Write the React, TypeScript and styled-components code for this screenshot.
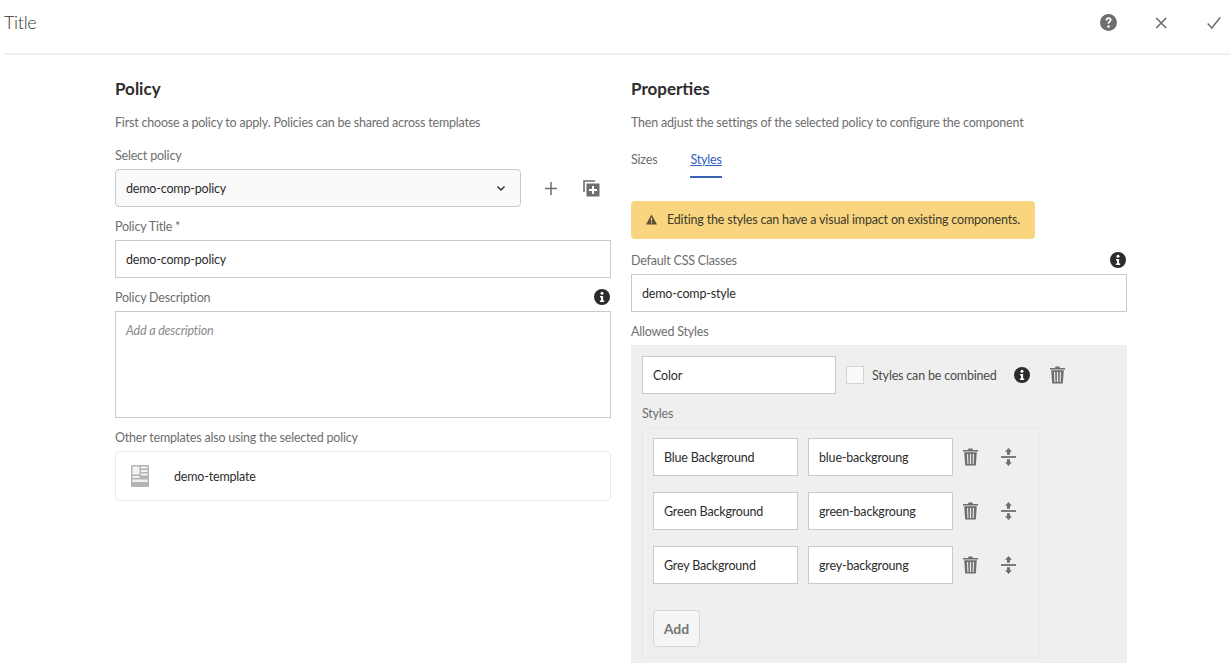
import React from "react";
import styled, { createGlobalStyle } from "styled-components";

const GlobalStyle = createGlobalStyle`
  html, body {
    margin: 0;
    padding: 0;
    height: 100%;
    overflow: hidden;
    background: #fff;
  }
  body {
    font-family: "Lato", "Noto Sans", sans-serif;
    font-size: 12.5px;
    letter-spacing: -0.18px;
    color: #4b4b4b;
  }
  * {
    box-sizing: border-box;
  }
`;

const Page = styled.div`
  width: 1230px;
  height: 663px;
  overflow: hidden;
`;

const TopBar = styled.header`
  height: 55px;
  margin-left: 4px;
  padding-bottom: 10px;
  display: flex;
  align-items: center;
  justify-content: space-between;
  border-bottom: 2px solid #f0f0f0;
`;

const DialogTitle = styled.h1`
  margin: 0;
  font-size: 18px;
  font-weight: 300;
  letter-spacing: -0.3px;
  color: #333;
`;

const TopActions = styled.div`
  display: flex;
  align-items: center;
  gap: 38px;
  padding: 2px 9px 0 0;
  color: #6e6e6e;
`;

const Columns = styled.main`
  display: grid;
  grid-template-columns: 496px 496px;
  column-gap: 20px;
  padding: 24px 0 0 115px;
`;

const Column = styled.section`
  display: flex;
  flex-direction: column;
`;

const Heading = styled.h2`
  margin: 0;
  height: 20px;
  line-height: 20px;
  font-size: 17px;
  font-weight: 700;
  letter-spacing: 0;
  color: #2c2c2c;
`;

const Description = styled.p`
  margin: 15px 0 0;
  height: 16px;
  line-height: 18px;
  letter-spacing: -0.2px;
  color: #6e6e6e;
`;

const Label = styled.div<{ $top?: number }>`
  display: flex;
  align-items: center;
  justify-content: space-between;
  height: 16px;
  line-height: 16px;
  margin-top: ${(p) => p.$top ?? 11}px;
  margin-bottom: 6px;
  padding: 2px 1px 0 0;
  letter-spacing: -0.2px;
  color: #6e6e6e;

  svg {
    margin-top: -2px;
  }
`;

const Select = styled.div`
  flex: 1;
  height: 38px;
  padding: 0 14px 0 10px;
  display: flex;
  align-items: center;
  justify-content: space-between;
  background: #fafafa;
  border: 1px solid #cacaca;
  border-radius: 4px;
  color: #2c2c2c;
`;

const SelectRow = styled.div`
  display: flex;
  align-items: center;
`;

const SelectActions = styled.div`
  display: flex;
  align-items: center;
  gap: 26px;
  padding: 0 11px 0 24px;
  color: #6e6e6e;
`;

const Input = styled.div<{ $width?: number }>`
  width: ${(p) => (p.$width ? `${p.$width}px` : "100%")};
  flex: none;
  height: 38px;
  line-height: 38px;
  padding: 0 10px;
  background: #fff;
  border: 1px solid #cacaca;
  color: #2c2c2c;
`;

const TextArea = styled.div`
  height: 107px;
  padding: 11px 10px;
  border: 1px solid #cacaca;
  font-style: italic;
  color: #8a8a8a;
`;

const TemplateCard = styled.div`
  height: 50px;
  display: flex;
  align-items: center;
  gap: 25px;
  padding-left: 15px;
  border: 1px solid #eaeaea;
  border-radius: 4px;
  color: #2c2c2c;
`;

const Tabs = styled.nav`
  display: flex;
  gap: 33px;
  margin-top: 21px;
  height: 27px;
`;

const Tab = styled.div<{ $active?: boolean }>`
  height: 27px;
  line-height: 18px;
  border-bottom: 2px solid ${(p) => (p.$active ? "#3b63b4" : "transparent")};
  color: ${(p) => (p.$active ? "#2f62bd" : "#6e6e6e")};
  text-decoration: ${(p) => (p.$active ? "underline" : "none")};
`;

const Alert = styled.div`
  width: 404px;
  height: 38px;
  margin-top: 23px;
  padding: 0 0 1px 15px;
  display: flex;
  align-items: center;
  gap: 10px;
  background: #f8d57e;
  border-radius: 4px;
  color: #3d3a2c;
`;

const StylesPanel = styled.div`
  height: 320px;
  padding: 11px;
  background: #efefef;
`;

const PanelRow = styled.div`
  display: flex;
  align-items: center;
`;

const Checkbox = styled.span`
  width: 18px;
  height: 18px;
  margin: 0 8px 0 10px;
  background: #fafafa;
  border: 1px solid #d4d4d4;
`;

const CheckLabel = styled.span`
  color: #4b4b4b;
`;

const PanelAction = styled.span<{ $left: number }>`
  display: flex;
  margin-left: ${(p) => p.$left}px;
  color: #6e6e6e;
`;

const InnerPanel = styled.div`
  width: 398px;
  height: 231px;
  padding: 10px;
  border: 1px solid #e8e8e8;
  display: flex;
  flex-direction: column;
  gap: 16px;
`;

const StyleRow = styled.div`
  display: flex;
  align-items: center;
  gap: 10px;
`;

const RowActions = styled.div`
  display: flex;
  align-items: center;
  gap: 23px;
  color: #6e6e6e;
`;

const AddButton = styled.button`
  width: 47px;
  height: 38px;
  margin-top: 10px;
  padding: 0;
  background: #f5f5f5;
  border: 1px solid #d6d6d6;
  border-radius: 4px;
  font-family: inherit;
  font-size: 14px;
  font-weight: 700;
  color: #767676;
`;

const InfoIcon = () => (
  <svg width="16" height="16" viewBox="0 0 16 16">
    <circle cx="8" cy="8" r="8" fill="#2c2c2c" />
    <circle cx="8" cy="4.2" r="1.5" fill="#fff" />
    <path d="M6 7h3.1v4.6H10.2V13H5.9v-1.4h1.1V8.4H6z" fill="#fff" />
  </svg>
);

const TrashIcon = () => (
  <svg width="15" height="18" viewBox="0 0 15 18">
    <path d="M5 2 5.6.6h3.8L10 2H15v1.5H0V2z" fill="currentColor" />
    <path
      fillRule="evenodd"
      d="M1.2 4.2h12.6L12.8 17.5H2.2zM4 6l.4 10h1.1L5.1 6zM6.9 6v10h1.2V6zM9.9 6l-.3 10h1.1L11 6z"
      fill="currentColor"
    />
  </svg>
);

const MoveIcon = () => (
  <svg width="15" height="18" viewBox="0 0 15 18">
    <rect y="8.1" width="15" height="1.8" fill="currentColor" />
    <path d="M7.5 0 11 3.8H9v2.9H6V3.8H4z" fill="currentColor" />
    <path d="M7.5 18 11 14.2H9v-2.9H6v2.9H4z" fill="currentColor" />
  </svg>
);

const TemplateIcon = () => (
  <svg width="18" height="22" viewBox="0 0 18 22">
    <rect width="18" height="22" rx="1.5" fill="#b4b4b4" />
    <g fill="#f2f2f2">
      <rect x="1.5" y="1.5" width="7" height="8" />
      <rect x="10" y="1.5" width="6.5" height="2" />
      <rect x="10" y="5" width="6.5" height="2" />
      <rect x="10" y="8.5" width="6.5" height="2" />
      <rect x="1.5" y="11" width="7" height="2" />
      <rect x="1.5" y="14.5" width="15" height="2.5" />
    </g>
  </svg>
);

const rows = [
  { name: "Blue Background", cls: "blue-backgroung" },
  { name: "Green Background", cls: "green-backgroung" },
  { name: "Grey Background", cls: "grey-backgroung" },
];

export default function App() {
  return (
    <Page>
      <GlobalStyle />
      <TopBar>
        <DialogTitle>Title</DialogTitle>
        <TopActions>
          <svg width="17" height="17" viewBox="0 0 16 16">
            <circle cx="8" cy="8" r="8" fill="currentColor" />
            <path
              d="M5.2 6c0-1.8 1.2-2.9 2.9-2.9s2.8 1 2.8 2.4c0 1.2-.7 1.8-1.4 2.3-.6.4-.8.7-.8 1.3H7.2c0-1.2.4-1.8 1.1-2.3.5-.4.8-.7.8-1.2 0-.5-.4-.9-1-.9-.7 0-1.1.5-1.1 1.3z"
              fill="#fff"
            />
            <circle cx="8" cy="11.7" r="1.2" fill="#fff" />
          </svg>
          <svg width="14" height="14" viewBox="0 0 14 14">
            <path d="M1.2 2l10 10M11.2 2l-10 10" stroke="currentColor" strokeWidth="1.7" fill="none" />
          </svg>
          <svg width="14" height="14" viewBox="0 0 14 14">
            <path d="M.7 7.5 4.8 12 13.3 1.2" stroke="currentColor" strokeWidth="1.5" fill="none" />
          </svg>
        </TopActions>
      </TopBar>
      <Columns>
        <Column>
          <Heading>Policy</Heading>
          <Description>First choose a policy to apply. Policies can be shared across templates</Description>
          <Label $top={17}>Select policy</Label>
          <SelectRow>
            <Select>
              demo-comp-policy
              <svg width="10" height="7" viewBox="0 0 10 7">
                <path d="M1.5 1.5 5 5l3.5-3.5" stroke="#2c2c2c" strokeWidth="1.4" fill="none" />
              </svg>
            </Select>
            <SelectActions>
              <svg width="12" height="13" viewBox="0 0 12 13">
                <path d="M6 0v13M0 6.5h12" stroke="currentColor" strokeWidth="1.5" />
              </svg>
              <svg width="17" height="17" viewBox="0 0 17 17">
                <path d="M1 12V1h11" stroke="currentColor" strokeWidth="1.6" fill="none" />
                <rect x="3.5" y="3.5" width="13" height="13" fill="currentColor" />
                <path d="M10 6v8M6 10h8" stroke="#fff" strokeWidth="2" />
              </svg>
            </SelectActions>
          </SelectRow>
          <Label>Policy Title *</Label>
          <Input>demo-comp-policy</Input>
          <Label>
            Policy Description
            <InfoIcon />
          </Label>
          <TextArea>Add a description</TextArea>
          <Label>Other templates also using the selected policy</Label>
          <TemplateCard>
            <TemplateIcon />
            demo-template
          </TemplateCard>
        </Column>
        <Column>
          <Heading>Properties</Heading>
          <Description>Then adjust the settings of the selected policy to configure the component</Description>
          <Tabs>
            <Tab>Sizes</Tab>
            <Tab $active>Styles</Tab>
          </Tabs>
          <Alert>
            <svg width="11" height="11" viewBox="0 0 12 11">
              <path d="M6 0 12 11H0z" fill="#5c5232" />
              <path d="M5.4 3.5h1.2v4H5.4zM5.4 8.3h1.2v1.2H5.4z" fill="#f8d57e" />
            </svg>
            Editing the styles can have a visual impact on existing components.
          </Alert>
          <Label $top={13}>
            Default CSS Classes
            <InfoIcon />
          </Label>
          <Input>demo-comp-style</Input>
          <Label>Allowed Styles</Label>
          <StylesPanel>
            <PanelRow>
              <Input $width={194}>Color</Input>
              <Checkbox />
              <CheckLabel>Styles can be combined</CheckLabel>
              <PanelAction $left={17}>
                <InfoIcon />
              </PanelAction>
              <PanelAction $left={20}>
                <TrashIcon />
              </PanelAction>
            </PanelRow>
            <Label>Styles</Label>
            <InnerPanel>
              {rows.map((row) => (
                <StyleRow key={row.cls}>
                  <Input $width={145}>{row.name}</Input>
                  <Input $width={145}>{row.cls}</Input>
                  <RowActions>
                    <TrashIcon />
                    <MoveIcon />
                  </RowActions>
                </StyleRow>
              ))}
              <AddButton>Add</AddButton>
            </InnerPanel>
          </StylesPanel>
        </Column>
      </Columns>
    </Page>
  );
}
